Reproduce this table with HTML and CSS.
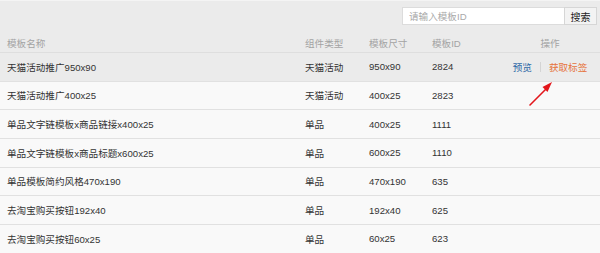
FILE: index.html
```html
<!DOCTYPE html>
<html lang="zh-CN">
<head>
<meta charset="utf-8">
<link rel="stylesheet" href="styles.css">
</head>
<body>
<div class="page">
  <div class="toolbar">
    <div class="search">
      <input class="search-input" type="text" placeholder="请输入模板ID">
      <button class="search-btn">搜索</button>
    </div>
  </div>
  <div class="table">
    <div class="row head">
      <div class="c name">模板名称</div>
      <div class="c">组件类型</div>
      <div class="c">模板尺寸</div>
      <div class="c">模板ID</div>
      <div class="c ops">操作</div>
    </div>
    <div class="row active">
      <div class="c name">天猫活动推广950x90</div>
      <div class="c">天猫活动</div>
      <div class="c">950x90</div>
      <div class="c">2824</div>
      <div class="c ops"><a class="lnk preview">预览</a><span class="sep"></span><a class="lnk get">获取标签</a></div>
    </div>
    <div class="row">
      <div class="c name">天猫活动推广400x25</div>
      <div class="c">天猫活动</div>
      <div class="c">400x25</div>
      <div class="c">2823</div>
      <div class="c ops"></div>
    </div>
    <div class="row">
      <div class="c name">单品文字链模板x商品链接x400x25</div>
      <div class="c">单品</div>
      <div class="c">400x25</div>
      <div class="c">1111</div>
      <div class="c ops"></div>
    </div>
    <div class="row">
      <div class="c name">单品文字链模板x商品标题x600x25</div>
      <div class="c">单品</div>
      <div class="c">600x25</div>
      <div class="c">1110</div>
      <div class="c ops"></div>
    </div>
    <div class="row">
      <div class="c name">单品模板简约风格470x190</div>
      <div class="c">单品</div>
      <div class="c">470x190</div>
      <div class="c">635</div>
      <div class="c ops"></div>
    </div>
    <div class="row">
      <div class="c name">去淘宝购买按钮192x40</div>
      <div class="c">单品</div>
      <div class="c">192x40</div>
      <div class="c">625</div>
      <div class="c ops"></div>
    </div>
    <div class="row">
      <div class="c name">去淘宝购买按钮60x25</div>
      <div class="c">单品</div>
      <div class="c">60x25</div>
      <div class="c">623</div>
      <div class="c ops"></div>
    </div>
  </div>
  <svg class="arrow" width="30" height="30" viewBox="0 0 30 30">
    <line x1="3" y1="26" x2="20" y2="9" stroke="#e3161b" stroke-width="1.6" stroke-linecap="round"/>
    <polygon points="25,3 15.5,8 20.5,13" fill="#e3161b"/>
  </svg>
</div>
</body>
</html>
```

FILE: styles.css
```css
html, body {
  margin: 0;
  padding: 0;
  background: #f9f9f9;
}
.page {
  position: relative;
  width: 600px;
  height: 253px;
  overflow: hidden;
  font-family: "Liberation Sans", "Noto Sans CJK SC", sans-serif;
  font-size: 9.6px;
  color: #333;
}
.toolbar {
  height: 33px;
  background: #ebebeb;
  border-top: 1px solid #f4f4f4;
  box-sizing: border-box;
  display: flex;
  justify-content: flex-end;
  align-items: flex-start;
  padding: 6px 3px 0 0;
}
.search {
  display: flex;
  height: 18px;
}
.search-input {
  width: 162px;
  height: 18px;
  box-sizing: border-box;
  margin: 0;
  border: 1px solid #dcdcdc;
  border-right: none;
  background: #fff;
  padding: 0 0 0 6px;
  font-family: inherit;
  font-size: 9.6px;
  color: #333;
  outline: none;
}
.search-input::placeholder {
  color: #a9a9a9;
}
.search-btn {
  width: 33px;
  height: 18px;
  box-sizing: border-box;
  margin: 0;
  padding: 0;
  border: 1px solid #d6d6d6;
  background: #f3f3f3;
  font-family: inherit;
  font-size: 10px;
  color: #222;
}
.row {
  display: grid;
  grid-template-columns: 305px 64px 63px 73px 95px;
  height: 28.67px;
  box-sizing: border-box;
  border-bottom: 1px solid #e1e1e1;
  align-items: center;
  background: #f9f9f9;
}
.row.head {
  height: 20px;
  background: #ebebeb;
  color: #a3a3a3;
  border-bottom: 1px solid #dedede;
}
.row.active {
  background: #ebebeb;
}
.c {
  white-space: nowrap;
}
.c.name {
  padding-left: 7px;
}
.c.ops {
  display: flex;
  justify-content: center;
  align-items: center;
  padding-right: 5px;
}
.lnk {
  cursor: pointer;
}
.preview {
  color: #2e6aa8;
}
.get {
  color: #e6733b;
}
.sep {
  width: 1px;
  height: 10px;
  background: #d4d4d4;
  margin: 0 8px;
}
.arrow {
  position: absolute;
  left: 527px;
  top: 79px;
}
```
